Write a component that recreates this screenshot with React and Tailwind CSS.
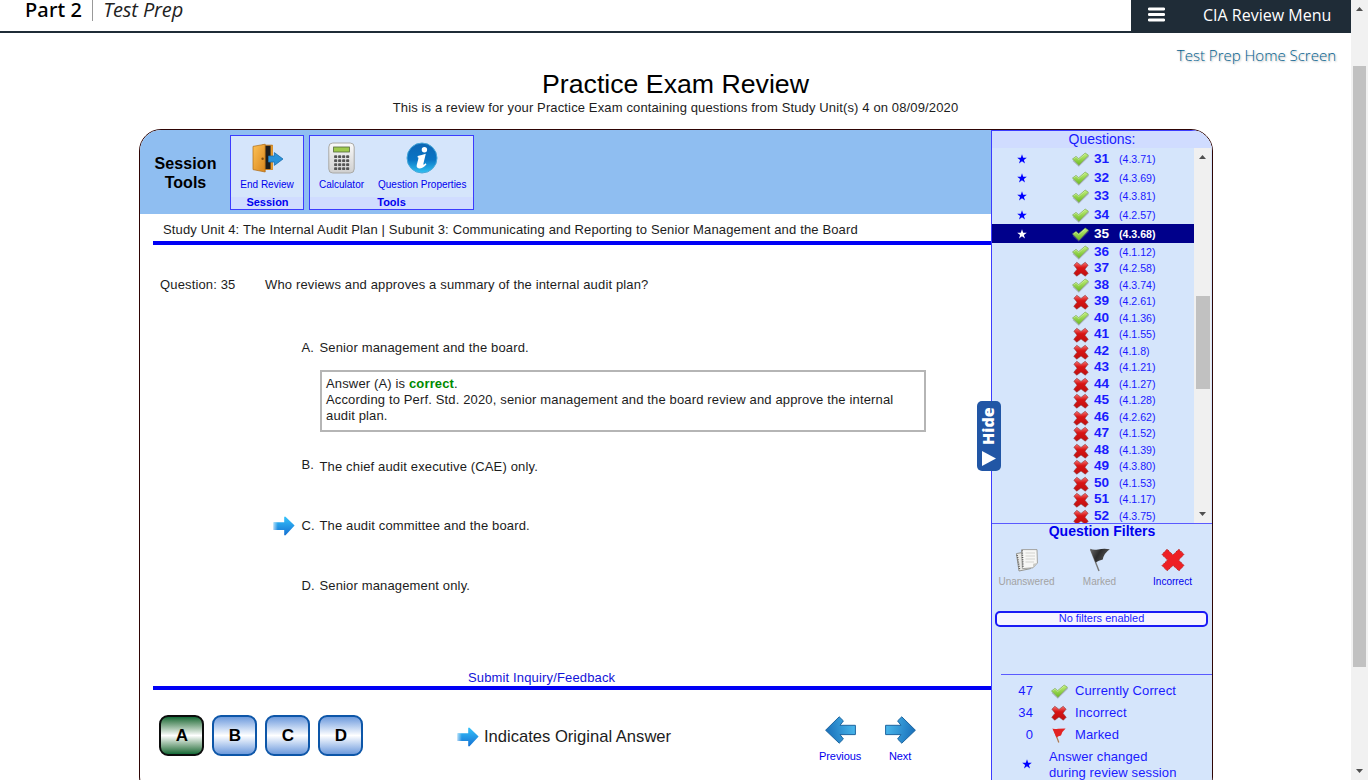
import React from "react";

const questions = [
  [31, "4.3.71", true, true],
  [32, "4.3.69", true, true],
  [33, "4.3.81", true, true],
  [34, "4.2.57", true, true],
  [35, "4.3.68", true, true],
  [36, "4.1.12", true],
  [37, "4.2.58", false],
  [38, "4.3.74", true],
  [39, "4.2.61", false],
  [40, "4.1.36", true],
  [41, "4.1.55", false],
  [42, "4.1.8", false],
  [43, "4.1.21", false],
  [44, "4.1.27", false],
  [45, "4.1.28", false],
  [46, "4.2.62", false],
  [47, "4.1.52", false],
  [48, "4.1.39", false],
  [49, "4.3.80", false],
  [50, "4.1.53", false],
  [51, "4.1.17", false],
  [52, "4.3.75", false],
];
const CURRENT = 35;

function Defs() {
  return (
    <svg width="0" height="0" className="absolute">
      <defs>
        <linearGradient id="gCheck" x1="0" y1="0" x2="0" y2="1">
          <stop offset="0" stopColor="#c2f07e" />
          <stop offset="1" stopColor="#6cba22" />
        </linearGradient>
        <linearGradient id="gCross" x1="0" y1="0" x2="0" y2="1">
          <stop offset="0" stopColor="#f57272" />
          <stop offset="0.4" stopColor="#d81414" />
          <stop offset="1" stopColor="#c01010" />
        </linearGradient>
        <linearGradient id="gArrow" x1="0" y1="0" x2="0" y2="1">
          <stop offset="0" stopColor="#35c3fb" />
          <stop offset="1" stopColor="#1570d2" />
        </linearGradient>
        <linearGradient id="gArrowFade" x1="0" y1="0" x2="1" y2="0">
          <stop offset="0" stopColor="#ffffff" stopOpacity="0.6" />
          <stop offset="0.2" stopColor="#ffffff" stopOpacity="0" />
        </linearGradient>
        <linearGradient id="gNav" x1="0" y1="0" x2="1" y2="0.2">
          <stop offset="0" stopColor="#4dbdf0" />
          <stop offset="1" stopColor="#1c74bd" />
        </linearGradient>
        <linearGradient id="gDoor" x1="0" y1="0" x2="1" y2="1">
          <stop offset="0" stopColor="#fdc257" />
          <stop offset="1" stopColor="#d9851b" />
        </linearGradient>
        <linearGradient id="gCalc" x1="0" y1="0" x2="0" y2="1">
          <stop offset="0" stopColor="#fafafa" />
          <stop offset="1" stopColor="#cfcfcf" />
        </linearGradient>
        <linearGradient id="gInfo" x1="0" y1="0" x2="0" y2="1">
          <stop offset="0" stopColor="#0d66b4" />
          <stop offset="0.55" stopColor="#0a74c4" />
          <stop offset="1" stopColor="#30c2f2" />
        </linearGradient>
        <linearGradient id="gFlag" x1="0" y1="0" x2="1" y2="0.4">
          <stop offset="0" stopColor="#6a6a6a" />
          <stop offset="0.5" stopColor="#2c2c2c" />
          <stop offset="1" stopColor="#555555" />
        </linearGradient>
      </defs>
    </svg>
  );
}

function Check() {
  return (
    <svg width="17" height="15" viewBox="0 0 17 15" className="block shrink-0">
      <path d="M1 8.6 L6.8 14 L16.6 4.2" fill="none" stroke="#777" strokeOpacity="0.45" strokeWidth="1.2" />
      <path
        d="M0.5 7 L4 4.4 L6.6 6.7 L13.2 1.1 L16.4 3.2 L6.9 13.2 Z"
        fill="url(#gCheck)"
        stroke="#7aa84c"
        strokeWidth="0.7"
        strokeLinejoin="round"
      />
      <path d="M1.6 6.9 L4 5.2 L6.6 7.6 L13.2 2" fill="none" stroke="#e8fbcc" strokeOpacity="0.6" strokeWidth="0.7" />
    </svg>
  );
}

function Cross() {
  return (
    <svg width="16" height="16" viewBox="0 0 16 16" className="block shrink-0">
      <path
        d="M0.9 4.2 L3.8 1.2 L8 4.4 L12.2 1.2 L15.1 4.2 L11.9 8.2 L15.2 12.3 L12.3 15.2 L8 12 L3.7 15.2 L0.8 12.3 L4.1 8.2 Z"
        fill="url(#gCross)"
        stroke="#8e3b3b"
        strokeOpacity="0.75"
        strokeWidth="0.8"
        strokeLinejoin="round"
      />
    </svg>
  );
}

function BigCross() {
  return (
    <svg width="24" height="24" viewBox="0 0 24 24" className="block">
      <path
        d="M1 6.6 L6 1.2 L12 6.9 L17.8 1.2 L23 6.4 L17.6 12 L23 17.4 L18 22.8 L12 17.4 L6.2 22.8 L1 17.6 L6.6 12 Z"
        fill="#ee2024"
        stroke="#b3231f"
        strokeWidth="1"
        strokeDasharray="1.4 0.8"
      />
    </svg>
  );
}

function Star({ fill }) {
  return (
    <svg width="10" height="10" viewBox="0 0 10 10" className="block shrink-0">
      <path
        d="M5 0.3 L6.2 3.7 L9.8 3.7 L6.9 5.9 L8 9.4 L5 7.3 L2 9.4 L3.1 5.9 L0.2 3.7 L3.8 3.7 Z"
        fill={fill}
      />
    </svg>
  );
}

function AnswerArrow() {
  const d = "M0.6 6.2 H11.2 V1 Q12 0.2 12.8 1 L21.6 9.6 L12.8 19 Q12 19.8 11.2 19 V14 H0.6 Z";
  return (
    <svg width="22" height="20" viewBox="0 0 22 20" className="block shrink-0">
      <path d={d} fill="url(#gArrow)" />
      <path d={d} fill="url(#gArrowFade)" />
    </svg>
  );
}

function NavArrow({ left }) {
  return (
    <svg width="31" height="28" viewBox="0 0 31 28" className="block shrink-0">
      <path
        d="M0.6 9.3 H16 L12.6 4.9 L16.8 0.8 L30.4 14.2 L16.8 27.2 L12.6 23 L16 18.6 H0.6 Z"
        fill="url(#gNav)"
        stroke="#1d659f"
        strokeWidth="1"
        transform={left ? "translate(31 0) scale(-1 1)" : undefined}
      />
    </svg>
  );
}

function DoorIcon() {
  return (
    <svg width="32" height="32" viewBox="0 0 32 32" className="block">
      <path d="M11 3.2 H21.5 V27.5 H11 Z" fill="#1d1d1d" stroke="#c98128" strokeWidth="1" />
      <path d="M19.6 3.5 H21.8 V27.5 H19.6 Z" fill="#e39a30" />
      <path d="M2 4.4 L14.2 2.2 V30 L2 27.6 Z" fill="url(#gDoor)" stroke="#ad6c15" strokeWidth="0.7" />
      <circle cx="11.6" cy="16.8" r="1.2" fill="#7c4a0d" />
      <path
        d="M17.5 14 H23.4 V10.6 L32 17 L23.4 23.4 V20 H17.5 Z"
        fill="#2a93da"
        stroke="#1a6fae"
        strokeWidth="0.8"
      />
    </svg>
  );
}

function CalculatorIcon() {
  const keys = [];
  for (let r = 0; r < 4; r++)
    for (let c = 0; c < 4; c++)
      keys.push(
        <rect key={`${r}-${c}`} x={6.1 + c * 4} y={13.2 + r * 4} width="3.1" height="2.9" rx="0.9" fill="#555555" />
      );
  return (
    <svg width="27" height="32" viewBox="0 0 27 32" className="block">
      <rect x="0.8" y="1" width="25.4" height="30" rx="4" fill="url(#gCalc)" stroke="#a9a9a6" strokeWidth="1" />
      <rect x="5.6" y="5" width="15.8" height="5" fill="#9fca4e" stroke="#54693a" strokeWidth="0.8" />
      {keys}
    </svg>
  );
}

function InfoIcon() {
  return (
    <svg width="32" height="32" viewBox="0 0 32 32" className="block">
      <circle cx="16" cy="16" r="15" fill="url(#gInfo)" stroke="#48a7d8" strokeWidth="1" />
      <circle cx="18.4" cy="7.8" r="2.7" fill="#ffffff" />
      <path
        d="M11.7 13.9 Q15.5 13 19.8 11.8 L17.4 21.8 Q17.2 23.1 18 22.6 L19.8 21.2 L20.4 22.4 Q17 26.2 13.2 26.4 Q10 26 10.8 22.8 L12.4 16.6 Q12.7 15.2 11.5 15.2 Z"
        fill="#ffffff"
      />
    </svg>
  );
}

function PagesIcon() {
  return (
    <svg width="24" height="24" viewBox="0 0 24 24" className="block">
      <path d="M1.4 5.6 L13 3.4 L15.6 20.6 L4 23 Z" fill="#e9e9e6" stroke="#8d8d88" strokeWidth="0.9" />
      <path d="M2.2 7 L4.7 22" stroke="#555" strokeWidth="1.4" strokeDasharray="1 1.2" />
      <path d="M6.6 1.6 H22 L22.4 15 L18 19.8 L7.4 20.6 Z" fill="#f7f7f5" stroke="#9b9b96" strokeWidth="0.9" />
      <path d="M18 19.8 L18.2 15.8 L22.4 15 Z" fill="#c9c9c4" />
      <path d="M7.2 2.4 L8 20" stroke="#555" strokeWidth="1.5" strokeDasharray="1 1.2" />
      <path d="M10.5 5 H20 M10.5 8 H20 M10.5 11 H20 M10.5 14 H19" stroke="#d3d3cf" strokeWidth="1" />
    </svg>
  );
}

function FlagIcon() {
  return (
    <svg width="22" height="24" viewBox="0 0 22 24" className="block">
      <path d="M1.6 1.6 L10 23" stroke="#777" strokeWidth="1.4" />
      <path d="M1 0.8 Q5 2.4 9 1.4 Q15 0.2 20.8 1.2 Q14.6 5.4 13.8 11.6 Q9.6 12.4 6.6 14.6 Z" fill="url(#gFlag)" />
    </svg>
  );
}

function RedFlag() {
  return (
    <svg width="16" height="16" viewBox="0 0 16 16" className="block shrink-0">
      <path d="M2.8 2 L7.8 15.4" stroke="#b07a50" strokeWidth="1.3" />
      <path d="M1.4 1.4 Q4 2.4 7 1.8 L14.6 1.4 Q10.8 4.6 10 8.4 Q7.4 8.6 5.4 10.6 Z" fill="#e32222" />
    </svg>
  );
}

function Scroller({ up }) {
  return (
    <svg width="7" height="4" viewBox="0 0 7 4" className="block">
      <path d={up ? "M0 4 L3.5 0 L7 4 Z" : "M0 0 L3.5 4 L7 0 Z"} fill="#4f4f4f" />
    </svg>
  );
}

function Header() {
  return (
    <header className="flex h-[33px] shrink-0 border-b-2 border-[#1f2c37] font-['Open_Sans','Noto_Sans',sans-serif]">
      <div className="flex h-[21px] flex-1 items-start pl-[25px] text-[20px] leading-[20px] text-black">
        <span className="font-['Noto_Sans',sans-serif] font-medium tracking-[0.12px]">Part 2</span>
        <span className="ml-[10px] h-[21px] w-px bg-[#999]" />
        <span className="ml-[10px] font-normal italic tracking-[-0.12px] text-[#222]">Test Prep</span>
      </div>
      <div className="flex h-[33px] w-[220px] items-start bg-[#1f2c37] pl-[17px] text-white">
        <svg width="17" height="15" viewBox="0 0 17 15" className="mt-[7px]">
          <path d="M1.2 2 H15.8 M1.2 7.5 H15.8 M1.2 13 H15.8" stroke="#fff" strokeWidth="2.8" strokeLinecap="round" />
        </svg>
        <span className="ml-[38px] mt-[4px] whitespace-nowrap text-[16px] leading-[22px]">CIA Review Menu</span>
      </div>
    </header>
  );
}

function Tool({ label, children }) {
  return (
    <div className="flex flex-col items-center whitespace-nowrap text-[10px] leading-[12px]">
      {children}
      <span className="mt-[5px]">{label}</span>
    </div>
  );
}

function Toolbar() {
  return (
    <div className="flex h-[84px] shrink-0 bg-[#8fbef1] tracking-normal">
      <div className="flex w-[90px] flex-col items-center pl-[1px] pt-[24px] text-center text-[16px] font-bold leading-[19px] text-black">
        <span className="tracking-[0.1px]">Session</span>
        <span>Tools</span>
      </div>
      <div className="mt-[5px] flex h-[75px] w-[74px] flex-col border border-[#3c3cff] bg-[#d5e5fb] text-[#0000ee]">
        <div className="flex h-[61px] justify-center pt-[6px]">
          <Tool label="End Review"><DoorIcon /></Tool>
        </div>
        <div className="h-[12px] bg-[#d0dcff] pl-[1px] text-center text-[11px] font-bold leading-[10px]">Session</div>
      </div>
      <div className="ml-[5px] mt-[5px] flex h-[75px] w-[165px] flex-col border border-[#3c3cff] bg-[#d5e5fb] text-[#0000ee]">
        <div className="flex h-[61px] gap-[14px] pl-[9px] pt-[6px]">
          <Tool label="Calculator"><CalculatorIcon /></Tool>
          <Tool label="Question Properties"><InfoIcon /></Tool>
        </div>
        <div className="h-[12px] bg-[#d0dcff] text-center text-[11px] font-bold leading-[10px]">Tools</div>
      </div>
    </div>
  );
}

function AnswerRow({ letter, text, arrow, className }) {
  return (
    <div className={`flex h-[20px] items-center ${className}`}>
      <div className="w-[28.5px]">{arrow && <AnswerArrow />}</div>
      <span className={letter === "B" ? "relative -top-[2px] w-[18px]" : "w-[18px]"}>{letter}.</span>
      <span>{text}</span>
    </div>
  );
}

function LetterButton({ letter, active }) {
  return (
    <button
      className={
        "flex h-[41px] w-[45px] items-center justify-center rounded-[9px] border-2 pb-[1px] text-[17px] font-bold leading-none text-black " +
        (active
          ? "border-[#0c0c0c] bg-linear-to-b from-[#0d6b38] via-white to-[#0d6b38]"
          : "border-[#0d56a8] bg-linear-to-b from-[#6f9bdc] via-white to-[#6f9bdc]")
      }
    >
      {letter}
    </button>
  );
}

function Content() {
  return (
    <section className="flex w-[851px] shrink-0 flex-col text-[13px] leading-[16px] tracking-[0.148px] text-[#1c1c1c]">
      <Toolbar />
      <div className="ml-[13px] h-[31px] shrink-0 border-b-4 border-[#0000f5] pl-[10px] pt-[8px]">
        Study Unit 4: The Internal Audit Plan | Subunit 3: Communicating and Reporting to Senior Management and the Board
      </div>
      <div className="mt-[32px] flex pl-[20px]">
        <span className="w-[105px]">Question: 35</span>
        <span>Who reviews and approves a summary of the internal audit plan?</span>
      </div>
      <div className="flex flex-col pl-[133px]">
        <AnswerRow letter="A" text="Senior management and the board." className="mt-[45px]" />
        <div className="ml-[47px] mt-[12px] h-[62px] w-[606px] border-2 border-[#b5b5b5] pl-[4px] pt-[4px]">
          Answer (A) is <b className="text-[#008a00]">correct</b>.
          <br />
          According to Perf. Std. 2020, senior management and the board review and approve the internal
          <br />
          audit plan.
        </div>
        <AnswerRow letter="B" text="The chief audit executive (CAE) only." className="mt-[25px]" />
        <AnswerRow letter="C" text="The audit committee and the board." arrow className="mt-[39px]" />
        <AnswerRow letter="D" text="Senior management only." className="mt-[40px]" />
      </div>
      <div className="ml-[13px] mt-[74px] h-[20px] shrink-0 border-b-4 border-[#0000f5] pl-[315px] text-[#1414d8]">
        Submit Inquiry/Feedback
      </div>
      <div className="flex h-[90px] shrink-0 items-start pl-[19.4px] pt-[25px]">
        <div className="flex gap-[8px]">
          <LetterButton letter="A" active />
          <LetterButton letter="B" />
          <LetterButton letter="C" />
          <LetterButton letter="D" />
        </div>
        <div className="ml-[93.5px] flex h-[44px] items-center gap-[5px] text-[16.6px] tracking-normal">
          <AnswerArrow />
          <span>Indicates Original Answer</span>
        </div>
        <div className="ml-[147px] flex pt-[1px] text-[11px] leading-[14px] tracking-[-0.08px] text-[#0000ee]">
          <div className="flex w-[44px] flex-col items-center">
            <NavArrow left />
            <span className="mt-[5px]">Previous</span>
          </div>
          <div className="ml-[16px] flex w-[44px] flex-col items-center">
            <NavArrow />
            <span className="mt-[5px]">Next</span>
          </div>
        </div>
      </div>
    </section>
  );
}

function QuestionRow({ n, code, ok, star }) {
  const on = n === CURRENT;
  return (
    <div
      className={
        "flex items-center " +
        (star ? "h-[18.75px] " : "h-[16.5px] ") +
        (on ? "bg-[#00008b] text-white" : "text-[#1a1aff]")
      }
    >
      <div className="flex w-[80px] pb-px pl-[25px] pt-[2px]">{star && <Star fill={on ? "#ffffff" : "#0000ff"} />}</div>
      <div className="w-[22px]">{ok ? <div className="pt-[2px]"><Check /></div> : <div className="pl-[0.5px] pt-[3px]"><Cross /></div>}</div>
      <span className="w-[25px] pt-[1px] text-[13.6px] font-bold leading-[14px]">{n}</span>
      <span className={"pt-[1px] text-[10.6px] leading-[14px] " + (on ? "font-bold" : "")}>({code})</span>
    </div>
  );
}

function Filter({ label, muted, children }) {
  return (
    <div className={"flex w-[73px] shrink-0 flex-col items-center text-[10px] leading-[12px] " + (muted ? "text-[#a3a3a3]" : "text-[#0000ee]")}>
      {children}
      <span className="mt-[4px]">{label}</span>
    </div>
  );
}

function Legend({ count, label, children }) {
  return (
    <div className="flex h-[22px] items-center">
      <span className="w-[41px] text-right">{count}</span>
      <div className="ml-[18px] w-[24px]">{children}</div>
      <span>{label}</span>
    </div>
  );
}

function Sidebar() {
  return (
    <aside className="flex w-[221px] shrink-0 flex-col border-l border-t border-[#3c3cff] bg-[#d5e5fb] text-[#1a1aff]">
      <div className="h-[17px] shrink-0 bg-[#d0dcff] text-center text-[14px] leading-[17px]">Questions:</div>
      <div className="flex h-[376px] shrink-0 overflow-hidden border-b border-[#5a5aff]">
        <div className="w-[202px] shrink-0 pt-[1px]">
          {questions.map(([n, code, ok, star]) => (
            <QuestionRow key={n} n={n} code={code} ok={ok} star={star} />
          ))}
        </div>
        <div className="flex w-[17px] flex-col items-center bg-[#f0f0f0]">
          <div className="flex h-[17px] shrink-0 items-center"><Scroller up /></div>
          <div className="mt-[131px] h-[93px] w-[14px] shrink-0 bg-[#c1c1c1]" />
          <div className="mt-auto flex h-[19px] items-center"><Scroller /></div>
        </div>
      </div>
      <div className="text-center text-[14px] font-bold leading-[14px] text-[#0000ee]">Question Filters</div>
      <div className="-ml-[2px] mt-[10px] flex">
        <Filter label="Unanswered" muted><PagesIcon /></Filter>
        <Filter label="Marked" muted><FlagIcon /></Filter>
        <Filter label="Incorrect"><BigCross /></Filter>
      </div>
      <div className="ml-[3px] mr-[4px] mt-[23px] h-[16px] shrink-0 rounded-[5px] border-2 border-[#1a1af5] bg-[#f6f4ff] text-center text-[11px] leading-[11px]">
        No filters enabled
      </div>
      <div className="ml-[9px] mt-[47px] h-px shrink-0 bg-[#5a5aff]" />
      <div className="pt-[5px] text-[13px] leading-[16px] tracking-[0.12px]">
        <Legend count="47" label="Currently Correct"><Check /></Legend>
        <Legend count="34" label="Incorrect"><Cross /></Legend>
        <Legend count="0" label="Marked"><RedFlag /></Legend>
        <div className="mt-[3px] flex items-center">
          <div className="w-[57px] pb-[2px] pl-[30px]"><Star fill="#0000ff" /></div>
          <div>Answer changed<br />during review session</div>
        </div>
      </div>
    </aside>
  );
}

export default function App() {
  return (
    <div className="flex h-[780px] w-[1368px] overflow-hidden bg-white font-['Liberation_Sans',Arial,sans-serif]">
      <Defs />
      <div className="flex w-[1351px] shrink-0 flex-col">
        <Header />
        <div className="flex h-[36px] shrink-0 justify-end pr-[15px] pt-[11px] font-['Open_Sans',sans-serif] text-[15px] font-light leading-[22px] text-[#00608e] [text-shadow:1px_1px_2px_rgba(0,0,0,0.3)]">
          Test Prep Home Screen
        </div>
        <h1 className="h-[31px] shrink-0 text-center text-[26.7px] leading-[30px] text-black">Practice Exam Review</h1>
        <p className="h-[29px] shrink-0 text-center text-[13px] leading-[16px] tracking-[0.135px] text-[#1c1c1c]">
          This is a review for your Practice Exam containing questions from Study Unit(s) 4 on 08/09/2020
        </p>
        <div className="relative ml-[139px] h-[670px] w-[1074px] shrink-0">
          <main className="flex h-full w-full overflow-hidden rounded-[22px] border border-[#2e0505]">
            <Content />
            <Sidebar />
          </main>
          <button className="absolute left-[838px] top-[272px] flex h-[70px] w-[24px] flex-col items-center rounded-[5px] bg-[#2156a5] text-white">
            <span className="mr-[3px] mt-[5px] h-[40px] text-[16px] font-extrabold leading-[24px] font-['Open_Sans',sans-serif] [writing-mode:vertical-rl] rotate-180">
              Hide
            </span>
            <svg width="14" height="15" viewBox="0 0 14 15" className="mt-[5px]">
              <path d="M0 0 L14 7.5 L0 15 Z" fill="#fff" />
            </svg>
          </button>
        </div>
      </div>
      <div className="flex w-[17px] shrink-0 flex-col items-center bg-[#f1f1f1]">
        <div className="flex h-[18px] items-center"><Scroller up /></div>
        <div className="mt-[48px] h-[601px] w-[13px] bg-[#c1c1c1]" />
        <div className="mt-auto flex h-[19px] items-center"><Scroller /></div>
      </div>
    </div>
  );
}
